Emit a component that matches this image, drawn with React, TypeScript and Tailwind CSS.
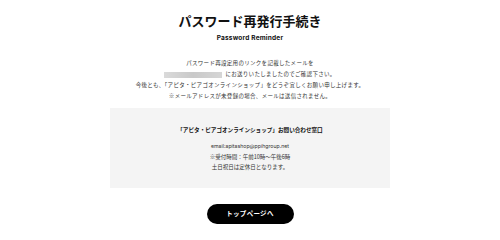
import React from 'react';

const jp = "font-['Noto_Sans_CJK_JP','Noto_Sans',sans-serif]";

const App: React.FC = () => {
  return (
    <div className={`w-[500px] h-[240px] bg-white text-[#333] ${jp} flex flex-col items-center overflow-hidden`}>
      {/* Heading */}
      <h1 className="pt-[13px] text-[13px] leading-[16px] font-bold text-[#111]">パスワード再発行手続き</h1>
      <p className="mt-[5px] text-[6.5px] leading-[8px] font-bold text-[#111] font-['Inter',sans-serif] tracking-[0.2px]">
        Password Reminder
      </p>

      {/* Message */}
      <div className="mt-[16px] text-center text-[5.5px] leading-[11px] tracking-[0.3px]">
        <p>パスワード再設定用のリンクを記載したメールを</p>
        <p className="flex items-center justify-center gap-[3px]">
          <span className="inline-block w-[58px] h-[6px] blur-[0.6px] bg-gradient-to-r from-[#dadada] via-[#c9c9c9] to-[#d6d6d6]"></span>
          <span>にお送りいたしましたのでご確認下さい。</span>
        </p>
        <p>今後とも、「アピタ・ピアゴオンラインショップ」をどうぞ宜しくお願い申し上げます。</p>
        <p>※メールアドレスが未登録の場合、メールは送信されません。</p>
      </div>

      {/* Contact box */}
      <div className="mt-[6px] w-[280px] h-[80px] bg-[#f4f4f4] flex flex-col items-center pt-[17px]">
        <p className="text-[5.6px] leading-[10px] font-bold text-[#111]">「アピタ・ピアゴオンラインショップ」お問い合わせ窓口</p>
        <div className="mt-[6px] text-center text-[5.5px] leading-[10.5px]">
          <p className="font-['Inter',sans-serif] text-[5.2px]">email:apitashop@ppihgroup.net</p>
          <p>※受付時間：午前10時〜午後6時</p>
          <p>土日祝日は定休日となります。</p>
        </div>
      </div>

      {/* Button */}
      <a className="mt-[16px] w-[87px] h-[20px] rounded-full bg-black text-white text-[6.5px] font-bold flex items-center justify-center tracking-[0.3px]">
        トップページへ
      </a>
    </div>
  );
};

export default App;
